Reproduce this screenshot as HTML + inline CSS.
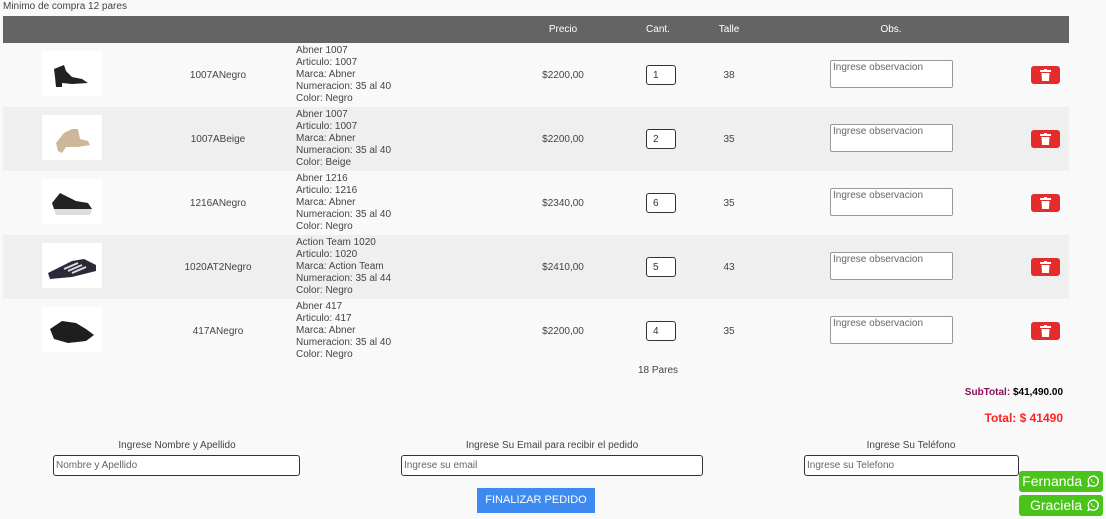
<!DOCTYPE html>
<html><head><meta charset="utf-8"><style>
*{box-sizing:border-box;margin:0;padding:0}
body{width:1106px;height:519px;background:#f9f9f9;font-family:"Liberation Sans",sans-serif;font-size:10px;color:#444;position:relative;overflow:hidden}
.a{position:absolute}
.hdr{left:3px;top:16px;width:1066px;height:27px;background:#646464;color:#fff}
.hdr span{position:absolute;top:8px;transform:translateX(-50%)}
.row{position:absolute;left:3px;width:1066px;height:64px}
.img{position:absolute;left:39px;top:8px;width:60px;height:45px;background:#fff}
.c{position:absolute;transform:translateX(-50%);white-space:nowrap}
.desc{position:absolute;left:293px;top:2px;line-height:12px}
.qty{position:absolute;left:643px;top:22px;width:30px;height:20px;border:1px solid #333;border-radius:3px;background:#fff;padding:4px 6px;color:#333}
.obs{position:absolute;left:827px;top:17px;width:123px;height:28px;border:1px solid #999;border-radius:2px;background:#fff;padding:1px 2px;color:#666}
.del{position:absolute;left:1028px;top:23px;width:29px;height:18px;background:#e52b2b;border-radius:3px}
.del svg{position:absolute;left:9px;top:3px}
.inp{position:absolute;height:21px;border:1px solid #333;border-radius:3px;background:#fff;padding:4px 2px;color:#666}
.wa{position:absolute;left:1019px;width:84px;height:21px;background:#4ac41a;color:#fff;font-size:14px;border-radius:3px;text-align:right;padding:2px 4px 0 0}
.wa svg{vertical-align:-2px}
</style></head><body>
<div class="a" style="left:3px;top:1px">Minimo de compra 12 pares</div>
<div class="a hdr"><span style="left:560px">Precio</span><span style="left:655px">Cant.</span><span style="left:726px">Talle</span><span style="left:888px">Obs.</span></div>

<div class="row" style="top:43px;background:#f9f9f9"><div class="img"><svg width="60" height="45"><path d="M12 18 L22 14 L24 20 L30 26 L40 28 L46 32 L30 33 L20 32 L20 36 L14 36 L13 26 Z" fill="#222"/></svg></div><div class="c" style="left:215px;top:27px">1007ANegro</div><div class="desc">Abner 1007<br>Articulo: 1007<br>Marca: Abner<br>Numeracion: 35 al 40<br>Color: Negro</div><div class="c" style="left:560px;top:27px">$2200,00</div><div class="qty">1</div><div class="c" style="left:726px;top:27px">38</div><div class="obs">Ingrese observacion</div><div class="del"><svg width="11" height="12"><rect x="0" y="1" width="11" height="2" fill="#fff"/><rect x="4" y="0" width="3" height="2" fill="#fff"/><path d="M1.5 4 H9.5 L9 12 H2 Z" fill="#fff"/></svg></div></div>

<div class="row" style="top:107px;background:#efefef"><div class="img"><svg width="60" height="45"><path d="M14 28 L22 18 L30 14 L36 14 L38 24 L46 26 L48 30 L36 32 L24 32 L20 38 L16 36 Z" fill="#cdb79a"/></svg></div><div class="c" style="left:215px;top:27px">1007ABeige</div><div class="desc">Abner 1007<br>Articulo: 1007<br>Marca: Abner<br>Numeracion: 35 al 40<br>Color: Beige</div><div class="c" style="left:560px;top:27px">$2200,00</div><div class="qty">2</div><div class="c" style="left:726px;top:27px">35</div><div class="obs">Ingrese observacion</div><div class="del"><svg width="11" height="12"><rect x="0" y="1" width="11" height="2" fill="#fff"/><rect x="4" y="0" width="3" height="2" fill="#fff"/><path d="M1.5 4 H9.5 L9 12 H2 Z" fill="#fff"/></svg></div></div>

<div class="row" style="top:171px;background:#f9f9f9"><div class="img"><svg width="60" height="45"><path d="M10 24 L18 14 L26 18 L34 22 L46 24 L50 30 L30 32 L12 30 Z" fill="#222"/><path d="M12 30 L50 30 L48 36 L14 36 Z" fill="#ddd"/></svg></div><div class="c" style="left:215px;top:27px">1216ANegro</div><div class="desc">Abner 1216<br>Articulo: 1216<br>Marca: Abner<br>Numeracion: 35 al 40<br>Color: Negro</div><div class="c" style="left:560px;top:27px">$2340,00</div><div class="qty">6</div><div class="c" style="left:726px;top:27px">35</div><div class="obs">Ingrese observacion</div><div class="del"><svg width="11" height="12"><rect x="0" y="1" width="11" height="2" fill="#fff"/><rect x="4" y="0" width="3" height="2" fill="#fff"/><path d="M1.5 4 H9.5 L9 12 H2 Z" fill="#fff"/></svg></div></div>

<div class="row" style="top:235px;background:#efefef"><div class="img"><svg width="60" height="45"><path d="M6 30 L30 18 L42 16 L54 22 L54 28 L30 34 L8 36 Z" fill="#2a2a3a"/><path d="M22 26 L36 20 M26 28 L40 22 M30 30 L44 24" stroke="#ddd" stroke-width="2"/></svg></div><div class="c" style="left:215px;top:27px">1020AT2Negro</div><div class="desc">Action Team 1020<br>Articulo: 1020<br>Marca: Action Team<br>Numeracion: 35 al 44<br>Color: Negro</div><div class="c" style="left:560px;top:27px">$2410,00</div><div class="qty">5</div><div class="c" style="left:726px;top:27px">43</div><div class="obs">Ingrese observacion</div><div class="del"><svg width="11" height="12"><rect x="0" y="1" width="11" height="2" fill="#fff"/><rect x="4" y="0" width="3" height="2" fill="#fff"/><path d="M1.5 4 H9.5 L9 12 H2 Z" fill="#fff"/></svg></div></div>

<div class="row" style="top:299px;background:#f9f9f9"><div class="img"><svg width="60" height="45"><path d="M8 22 L20 14 L34 16 L44 22 L52 28 L44 34 L26 36 L12 32 Z" fill="#1e1e1e"/></svg></div><div class="c" style="left:215px;top:27px">417ANegro</div><div class="desc">Abner 417<br>Articulo: 417<br>Marca: Abner<br>Numeracion: 35 al 40<br>Color: Negro</div><div class="c" style="left:560px;top:27px">$2200,00</div><div class="qty">4</div><div class="c" style="left:726px;top:27px">35</div><div class="obs">Ingrese observacion</div><div class="del"><svg width="11" height="12"><rect x="0" y="1" width="11" height="2" fill="#fff"/><rect x="4" y="0" width="3" height="2" fill="#fff"/><path d="M1.5 4 H9.5 L9 12 H2 Z" fill="#fff"/></svg></div></div>

<div class="c" style="left:658px;top:365px">18 Pares</div>
<div class="a" style="right:43px;top:387px;font-weight:bold;font-size:10px;color:#000"><span style="color:#8b0f5a">SubTotal:</span> $41,490.00</div>
<div class="a" style="right:43px;top:411px;font-weight:bold;font-size:12px;color:#f22">Total: $ 41490</div>

<div class="c" style="left:177px;top:440px">Ingrese Nombre y Apellido</div>
<div class="c" style="left:552px;top:440px">Ingrese Su Email para recibir el pedido</div>
<div class="c" style="left:911px;top:440px">Ingrese Su Teléfono</div>
<div class="inp" style="left:53px;top:455px;width:247px">Nombre y Apellido</div>
<div class="inp" style="left:401px;top:455px;width:302px">Ingrese su email</div>
<div class="inp" style="left:804px;top:455px;width:215px">Ingrese su Telefono</div>
<div class="a" style="left:477px;top:488px;width:118px;height:25px;background:#3d8af0;color:#fff;font-size:11px;text-align:center;padding-top:6px">FINALIZAR PEDIDO</div>
<div class="wa" style="top:471px">Fernanda <svg width="13" height="13" viewBox="0 0 13 13"><path d="M2.2 11.2 L3 8.8 A5 5 0 1 1 4.6 10.4 Z" fill="none" stroke="#fff" stroke-width="1.3"/><path d="M4.8 4.2 C4.6 5.6 6.6 8 8.4 8.2 L8.8 7.4 L7.8 6.9 L7.3 7.3 C6.6 7 6 6.3 5.8 5.8 L6.2 5.3 L5.7 4.2 Z" fill="#fff"/></svg></div>
<div class="wa" style="top:495px">Graciela <svg width="13" height="13" viewBox="0 0 13 13"><path d="M2.2 11.2 L3 8.8 A5 5 0 1 1 4.6 10.4 Z" fill="none" stroke="#fff" stroke-width="1.3"/><path d="M4.8 4.2 C4.6 5.6 6.6 8 8.4 8.2 L8.8 7.4 L7.8 6.9 L7.3 7.3 C6.6 7 6 6.3 5.8 5.8 L6.2 5.3 L5.7 4.2 Z" fill="#fff"/></svg></div>
</body></html>
